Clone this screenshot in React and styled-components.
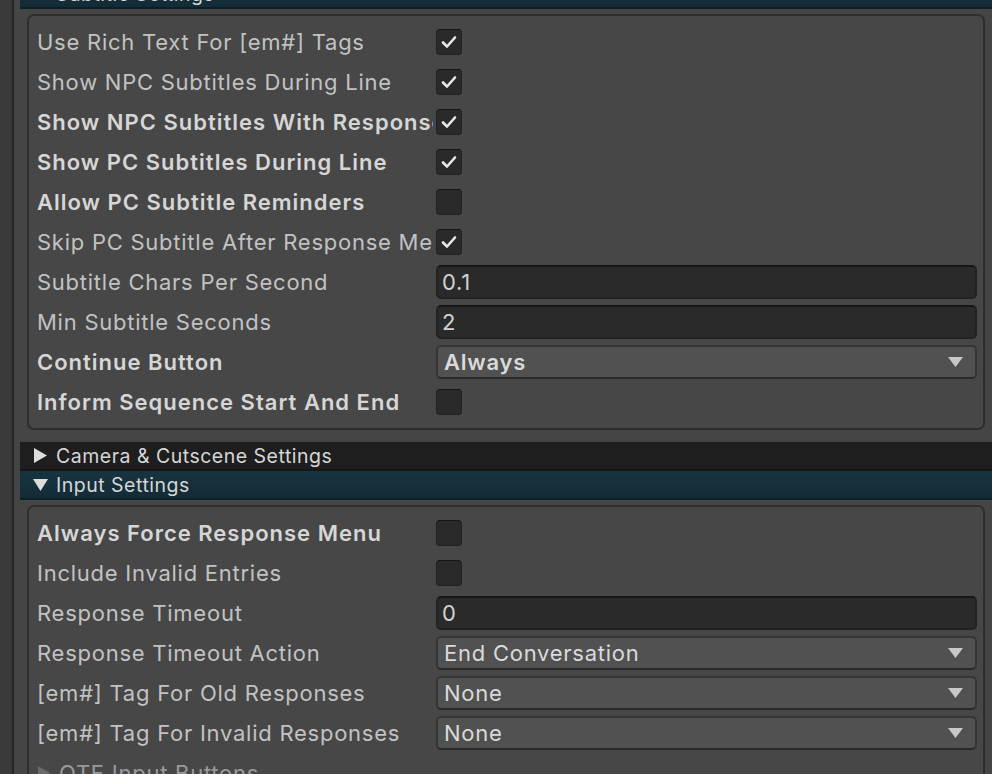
import styled, { createGlobalStyle } from 'styled-components';

const Global = createGlobalStyle`
 html, body {
  margin: 0;
  padding: 0;
  background: #454545;
  overflow: hidden;
 }
 body {
  font-family: Inter, "Noto Sans", sans-serif;
 }
`;

/* Layout */
const Page = styled.div`
 display: flex;
 width: 992px;
 height: 774px;
 overflow: hidden;
`;

const Gutter = styled.div`
 width: 12px;
 flex-shrink: 0;
 background: #3a3a3a;
 border-right: 2px solid #262626;
`;

const Content = styled.div`
 flex: 1;
 padding-left: 6px;
 background: #454545;
 margin-top: -20px;
`;

/* Foldout headers */
const Header = styled.div`
 height: 27px;
 display: flex;
 align-items: center;
 gap: 8px;
 padding-left: 13px;
 color: #d6d6d6;
 font-size: 19.5px;
 letter-spacing: 0.5px;
 background: ${(p) => (p.open ? 'linear-gradient(#183441, #132b36)' : '#1e1e1e')};
 border-bottom: 2px solid ${(p) => (p.open ? '#0f1f26' : '#161616')};
`;

const Box = styled.div`
 margin: 5px 7px 12px 7px;
 padding: 6px 0 6px 8px;
 border: 2px solid #2e2e2e;
 border-radius: 7px;
 background: #474747;
`;

const Row = styled.div`
 height: 40px;
 display: flex;
 align-items: center;
`;

const Label = styled.div`
 width: 396px;
 margin-right: 3px;
 flex-shrink: 0;
 overflow: hidden;
 white-space: nowrap;
 font-size: 22px;
 color: ${(p) => (p.bold ? '#d6d6d6' : '#c2c2c2')};
 font-weight: ${(p) => (p.bold ? 600 : 400)};
 letter-spacing: ${(p) => (p.bold ? '1px' : '0.75px')};
`;

const CheckBox = styled.div`
 width: 26px;
 height: 26px;
 box-sizing: border-box;
 border-radius: 4px;
 background: #2a2a2a;
 border: 1px solid #212121;
 border-top-color: #151515;
 display: flex;
 align-items: center;
 justify-content: center;
`;

const Field = styled.div`
 width: 541px;
 height: 34px;
 box-sizing: border-box;
 border-radius: 5px;
 background: #2a2a2a;
 border: 2px solid #222;
 border-top-color: #171717;
 padding-left: 4px;
 display: flex;
 align-items: center;
 font-size: 22px;
 letter-spacing: 0.75px;
 color: #d2d2d2;
`;

const Dropdown = styled(Field)`
 background: #515151;
 border-color: #353535;
 border-bottom-color: #2a2a2a;
 justify-content: space-between;
 padding-left: 6px;
 padding-right: 12px;
 color: #dadada;
 font-weight: ${(p) => (p.bold ? 600 : 400)};
`;

const SubFold = styled.div`
 height: 40px;
 display: flex;
 align-items: center;
 gap: 8px;
 font-size: 22px;
 letter-spacing: 0.75px;
 color: #9a9a9a;
`;

function Tri({ down, color = '#dcdcdc', size = 15 }) {
 return down ? (
  <svg width={size} height={size} viewBox="0 0 15 15">
   <polygon points="0,2 15,2 7.5,14" fill={color} />
  </svg>
 ) : (
  <svg width={size} height={size} viewBox="0 0 15 15">
   <polygon points="1,0 14,7.5 1,15" fill={color} />
  </svg>
 );
}

function Check({ on }) {
 return (
  <CheckBox>
   {on && (
    <svg width="18" height="18" viewBox="0 0 18 18">
     <polyline points="3,9.5 7,13.5 15,4.5" fill="none" stroke="#e8e8e8" strokeWidth="2.6" strokeLinecap="round" strokeLinejoin="round" />
    </svg>
   )}
  </CheckBox>
 );
}

function Select({ value, bold }) {
 return (
  <Dropdown bold={bold}>
   <span>{value}</span>
   <svg width="15" height="10" viewBox="0 0 15 10">
    <polygon points="0,0 15,0 7.5,10" fill="#c8c8c8" />
   </svg>
  </Dropdown>
 );
}

const subtitleRows = [
 { label: 'Use Rich Text For [em#] Tags', type: 'check', on: true },
 { label: 'Show NPC Subtitles During Line', type: 'check', on: true },
 { label: 'Show NPC Subtitles With Responses', type: 'check', on: true, bold: true },
 { label: 'Show PC Subtitles During Line', type: 'check', on: true, bold: true },
 { label: 'Allow PC Subtitle Reminders', type: 'check', on: false, bold: true },
 { label: 'Skip PC Subtitle After Response Menu', type: 'check', on: true },
 { label: 'Subtitle Chars Per Second', type: 'field', value: '0.1' },
 { label: 'Min Subtitle Seconds', type: 'field', value: '2' },
 { label: 'Continue Button', type: 'select', value: 'Always', bold: true, boldValue: true },
 { label: 'Inform Sequence Start And End', type: 'check', on: false, bold: true },
];

const inputRows = [
 { label: 'Always Force Response Menu', type: 'check', on: false, bold: true },
 { label: 'Include Invalid Entries', type: 'check', on: false },
 { label: 'Response Timeout', type: 'field', value: '0' },
 { label: 'Response Timeout Action', type: 'select', value: 'End Conversation' },
 { label: '[em#] Tag For Old Responses', type: 'select', value: 'None' },
 { label: '[em#] Tag For Invalid Responses', type: 'select', value: 'None' },
];

function PropRow({ row }) {
 return (
  <Row>
   <Label bold={row.bold}>{row.label}</Label>
   {row.type === 'check' && <Check on={row.on} />}
   {row.type === 'field' && <Field>{row.value}</Field>}
   {row.type === 'select' && <Select value={row.value} bold={row.boldValue} />}
  </Row>
 );
}

export default function App() {
 return (
  <>
   <Global />
   <Page>
    <Gutter />
    <Content>
     <Header open>
      <Tri down />
      Subtitle Settings
     </Header>
     <Box>
      {subtitleRows.map((r) => (
       <PropRow key={r.label} row={r} />
      ))}
     </Box>
     <Header>
      <Tri />
      Camera &amp; Cutscene Settings
     </Header>
     <Header open>
      <Tri down />
      Input Settings
     </Header>
     <Box>
      {inputRows.map((r) => (
       <PropRow key={r.label} row={r} />
      ))}
      <SubFold>
       <Tri color="#6a6a6a" size={14} />
       QTE Input Buttons
      </SubFold>
     </Box>
    </Content>
   </Page>
  </>
 );
}
